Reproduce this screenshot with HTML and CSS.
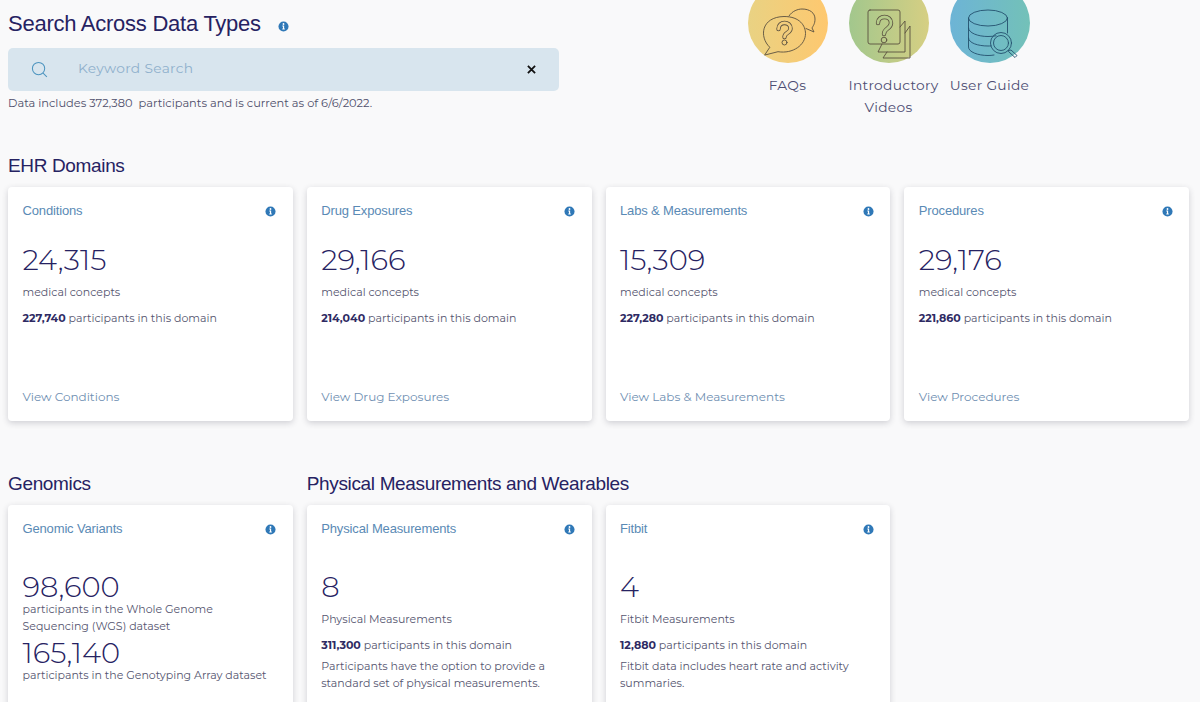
FILE: index.html
```html
<!DOCTYPE html>
<html lang="en">
<head>
  <meta charset="UTF-8" />
  <title>Data Browser</title>
  <link rel="stylesheet" href="styles.css">
</head>
<body>
  <div class="top">
    <div class="search-col">
      <h1 class="page-title">Search Across Data Types
        <svg class="info info-title" viewBox="0 0 12 12"><use href="#info"/></svg>
      </h1>
      <div class="search-bar">
        <svg class="search-icon" viewBox="0 0 18 18"><circle cx="8" cy="8" r="6.500"/><path d="M12.800 12.800l4 4"/></svg>
        <span class="placeholder">Keyword Search</span>
        <svg class="clear-icon" viewBox="0 0 10 10"><path d="M1 1l8 8M9 1l-8 8"/></svg>
      </div>
      <p class="note">Data includes 372,380&nbsp; participants and is current as of 6/6/2022.</p>
    </div>

    <div class="tiles">
      <div class="tile">
        <div class="disc disc-faq">
          <svg viewBox="0 0 80 80" class="line-dark">
            <path d="M21.500 64C11 54 13 34 36 33.500C52 33.500 57.500 43 57.500 50.500C57.500 62 45 71 30 68.700L17 72Z"/>
            <path d="M41 33C44 28 50 26 54 26C62 26 67 30 67 36C67 41 65 43 64 45L66 49L58 45.500"/>
            <path class="q-out" d="M30.500 46C30.500 38 42.500 38 42.500 45.500C42.500 50 36.500 49.500 36.500 54"/>
            <path class="q-in" d="M30.500 46C30.500 38 42.500 38 42.500 45.500C42.500 50 36.500 49.500 36.500 54"/>
            <circle cx="36.500" cy="59.500" r="2.500"/>
          </svg>
        </div>
        <span class="tile-label">FAQs</span>
      </div>
      <div class="tile">
        <div class="disc disc-video">
          <svg viewBox="0 0 80 80" class="line-dark">
            <rect x="19" y="27" width="32" height="34" rx="2"/>
            <path d="M51 44L56 38V69H29L33 61"/>
            <path d="M56 50L61 43V75H34L38 69"/>
            <path class="q-out" d="M29 40C29 32 42 32 42 40C42 46 35 45 35 51"/>
            <path class="q-in" d="M29 40C29 32 42 32 42 40C42 46 35 45 35 51"/>
            <circle cx="35" cy="57" r="2.800"/>
          </svg>
        </div>
        <span class="tile-label"><span class="label-nudge">Introductory</span><br>Videos</span>
      </div>
      <div class="tile">
        <div class="disc disc-guide">
          <svg viewBox="0 0 80 80" class="line-navy">
            <ellipse cx="38" cy="35" rx="19.500" ry="8"/>
            <path d="M18.500 35V64C18.500 69 28 72.500 38 72.500C40 72.500 42 72.400 44 72"/>
            <path d="M57.500 35V50"/>
            <path d="M18.500 45C18.500 50 28 53.500 38 53.500C41 53.500 44 53.200 46 52.800"/>
            <path d="M18.500 55C18.500 60 28 63 38 63C39 63 40 63 41 62.900"/>
            <circle cx="51" cy="60" r="10.500"/>
            <circle cx="51" cy="60" r="7.500"/>
            <path d="M58.500 67.500L61 67L67 72.500L65 74.500L59 69Z"/>
          </svg>
        </div>
        <span class="tile-label">User Guide</span>
      </div>
    </div>
  </div>

  <h2 class="section-title section-ehr">EHR Domains</h2>
  <div class="card-row">
    <div class="card">
      <div class="card-head"><span class="card-title">Conditions</span><svg class="info" viewBox="0 0 12 12"><use href="#info"/></svg></div>
      <div class="count">24,315</div>
      <p class="label">medical concepts</p>
      <p class="label label-part"><b>227,740</b> participants in this domain</p>
      <a class="card-link">View Conditions</a>
    </div>
    <div class="card">
      <div class="card-head"><span class="card-title">Drug Exposures</span><svg class="info" viewBox="0 0 12 12"><use href="#info"/></svg></div>
      <div class="count">29,166</div>
      <p class="label">medical concepts</p>
      <p class="label label-part"><b>214,040</b> participants in this domain</p>
      <a class="card-link">View Drug Exposures</a>
    </div>
    <div class="card">
      <div class="card-head"><span class="card-title">Labs &amp; Measurements</span><svg class="info" viewBox="0 0 12 12"><use href="#info"/></svg></div>
      <div class="count">15,309</div>
      <p class="label">medical concepts</p>
      <p class="label label-part"><b>227,280</b> participants in this domain</p>
      <a class="card-link">View Labs &amp; Measurements</a>
    </div>
    <div class="card">
      <div class="card-head"><span class="card-title">Procedures</span><svg class="info" viewBox="0 0 12 12"><use href="#info"/></svg></div>
      <div class="count">29,176</div>
      <p class="label">medical concepts</p>
      <p class="label label-part"><b>221,860</b> participants in this domain</p>
      <a class="card-link">View Procedures</a>
    </div>
  </div>

  <div class="card-row heading-row">
    <h2 class="section-title">Genomics</h2>
    <h2 class="section-title span-rest">Physical Measurements and Wearables</h2>
  </div>
  <div class="card-row">
    <div class="card">
      <div class="card-head"><span class="card-title">Genomic Variants</span><svg class="info" viewBox="0 0 12 12"><use href="#info"/></svg></div>
      <div class="count count-low">98,600</div>
      <p class="label label-tight">participants in the Whole Genome Sequencing (WGS) dataset</p>
      <div class="count count-second">165,140</div>
      <p class="label label-tight">participants in the Genotyping Array dataset</p>
    </div>
    <div class="card">
      <div class="card-head"><span class="card-title">Physical Measurements</span><svg class="info" viewBox="0 0 12 12"><use href="#info"/></svg></div>
      <div class="count count-low">8</div>
      <p class="label">Physical Measurements</p>
      <p class="label label-part"><b>311,300</b> participants in this domain</p>
      <p class="label label-extra">Participants have the option to provide a standard set of physical measurements.</p>
    </div>
    <div class="card">
      <div class="card-head"><span class="card-title">Fitbit</span><svg class="info" viewBox="0 0 12 12"><use href="#info"/></svg></div>
      <div class="count count-low">4</div>
      <p class="label">Fitbit Measurements</p>
      <p class="label label-part"><b>12,880</b> participants in this domain</p>
      <p class="label label-extra">Fitbit data includes heart rate and activity summaries.</p>
    </div>
  </div>

  <svg class="defs" width="0" height="0">
    <symbol id="info" viewBox="0 0 12 12">
      <circle cx="6" cy="6" r="5.500" fill="#2f78b7"/>
      <circle cx="6" cy="3.300" r="1" fill="#fff"/>
      <path d="M4.700 5h2v3.300h.7v1H4.700v-1h.7V6h-.7z" fill="#fff"/>
    </symbol>
  </svg>
</body>
</html>
```

FILE: styles.css
```css
:root {
  --navy: #262262;
  --blue: #5a8ab5;
  --text: #55556f;
}

html, body {
  height: 702px;
  overflow: hidden;
}

body {
  margin: 0;
  padding: 0 11px 0 8px;
  background: #f9f9fa;
  font-family: 'Montserrat', 'Inter', sans-serif;
  color: var(--text);
}

.top {
  display: flex;
  height: 140px;
}

.search-col {
  width: 551px;
  padding-top: 11px;
}

.page-title {
  margin: 0;
  height: 37px;
  font: 400 22px/26px 'Liberation Sans', sans-serif;
  letter-spacing: -0.25px;
  color: var(--navy);
}

.info {
  width: 11px;
  height: 11px;
  flex: none;
}

.info-title {
  margin-left: 11px;
  vertical-align: -1px;
}

.search-bar {
  display: flex;
  align-items: center;
  height: 43px;
  padding: 0 23px 0 23px;
  background: #d8e5ee;
  border-radius: 5px;
}

.search-icon {
  width: 17px;
  height: 17px;
  fill: none;
  stroke: #4c94bf;
  stroke-width: 1.100;
}

.placeholder {
  flex: 1;
  margin: -4px 0 0 30px;
  font-size: 13.800px;
  letter-spacing: 0.3px;
  color: #8fb0cc;
}

.clear-icon {
  width: 9px;
  height: 9px;
  fill: none;
  stroke: #111;
  stroke-width: 2;
}

.note {
  margin: 6px 0 0;
  font-size: 11.400px;
  line-height: 13px;
  color: #4f4f6b;
}

.tiles {
  display: flex;
  margin: -17px 0 0 178px;
}

.tile {
  display: flex;
  flex-direction: column;
  align-items: center;
  width: 101px;
  text-align: center;
  font-size: 13.800px;
  line-height: 22px;
  letter-spacing: 0.3px;
  color: #4d4d72;
}

.label-nudge {
  margin-left: 10px;
}

.disc {
  width: 80px;
  height: 80px;
  border-radius: 50%;
  margin-bottom: 11px;
}

.disc svg {
  display: block;
  fill: none;
  stroke-width: 0.900;
  stroke-linejoin: round;
  stroke-linecap: round;
}

.disc-faq { background: linear-gradient(90deg, #e9d283, #fec86f); }
.disc-video { background: linear-gradient(90deg, #a2c78d, #d6cf83); }
.disc-guide { background: linear-gradient(90deg, #6db4d6, #73c1b8); }

.line-dark { stroke: #5a5040; }
.line-navy { stroke: #24506e; }

.q-out { stroke-width: 4.400; }
.q-in { stroke-width: 2.800; stroke: #f2cd7c; }
.disc-video .q-in { stroke: #b5cb89; }

.section-title {
  margin: 0;
  font: 400 19px/24px 'Liberation Sans', sans-serif;
  letter-spacing: -0.35px;
  color: var(--navy);
}

.section-ehr {
  margin-top: 14px;
  height: 33px;
}

.card-row {
  display: grid;
  grid-template-columns: repeat(4, 1fr);
  gap: 14px;
}

.heading-row {
  margin: 51px 0 9px;
}

.span-rest {
  grid-column: span 3;
}

.card {
  display: flex;
  flex-direction: column;
  height: 234px;
  box-sizing: border-box;
  padding: 16px 14px 16px 14.500px;
  background: #fff;
  border-radius: 4px;
  box-shadow: 0 2px 6px rgba(40, 40, 60, 0.2);
}

.card-head {
  display: flex;
  justify-content: space-between;
  align-items: flex-start;
  padding-right: 2.500px;
}

.card-head .info {
  margin-top: 3px;
}

.card-title {
  font: 400 13px/16px 'Liberation Sans', sans-serif;
  letter-spacing: -0.15px;
  color: var(--blue);
}

.count {
  margin-top: 23px;
  font-size: 29px;
  font-weight: 300;
  line-height: 36px;
  color: var(--navy);
}

.count-low {
  margin-top: 32px;
}

.count-second {
  margin-top: 0;
}

.label {
  margin: 6px 0 0;
  font-size: 11px;
  line-height: 17px;
}

.label-part {
  margin-top: 9px;
}

.label-part b {
  font-weight: 700;
  color: #2e2a63;
}

.label-extra {
  margin-top: 4px;
}

.label-tight {
  margin-top: -4px;
}

.card-link {
  margin-top: auto;
  font-size: 12px;
  line-height: 16px;
  color: #6f8fb2;
}

.defs {
  position: absolute;
}
```
